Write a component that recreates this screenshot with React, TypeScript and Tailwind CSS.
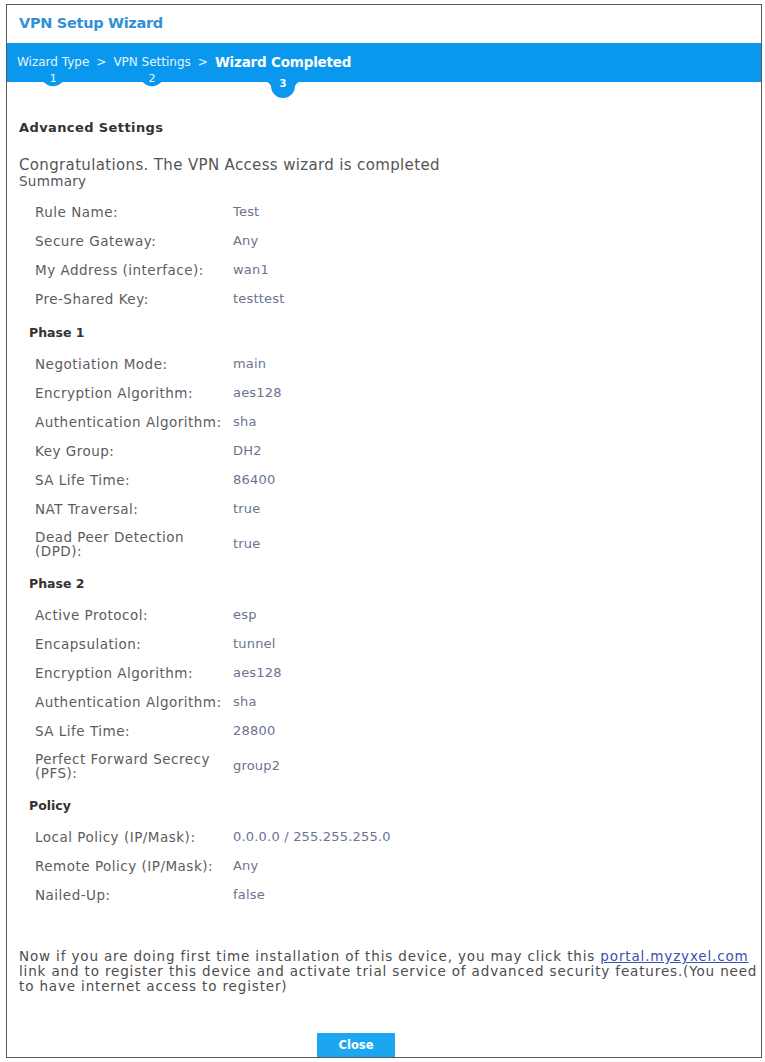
import React from "react";

type Row = { label: React.ReactNode; value: string; tall?: boolean };
type Section = { title?: string; rows: Row[] };

const sections: Section[] = [
  {
    rows: [
      { label: "Rule Name:", value: "Test" },
      { label: "Secure Gateway:", value: "Any" },
      { label: "My Address (interface):", value: "wan1" },
      { label: "Pre-Shared Key:", value: "testtest" },
    ],
  },
  {
    title: "Phase 1",
    rows: [
      { label: "Negotiation Mode:", value: "main" },
      { label: "Encryption Algorithm:", value: "aes128" },
      { label: "Authentication Algorithm:", value: "sha" },
      { label: "Key Group:", value: "DH2" },
      { label: "SA Life Time:", value: "86400" },
      { label: "NAT Traversal:", value: "true" },
      {
        label: (
          <>
            Dead Peer Detection
            <br />
            (DPD):
          </>
        ),
        value: "true",
        tall: true,
      },
    ],
  },
  {
    title: "Phase 2",
    rows: [
      { label: "Active Protocol:", value: "esp" },
      { label: "Encapsulation:", value: "tunnel" },
      { label: "Encryption Algorithm:", value: "aes128" },
      { label: "Authentication Algorithm:", value: "sha" },
      { label: "SA Life Time:", value: "28800" },
      {
        label: (
          <>
            Perfect Forward Secrecy
            <br />
            (PFS):
          </>
        ),
        value: "group2",
        tall: true,
      },
    ],
  },
  {
    title: "Policy",
    rows: [
      { label: "Local Policy (IP/Mask):", value: "0.0.0.0 / 255.255.255.0" },
      { label: "Remote Policy (IP/Mask):", value: "Any" },
      { label: "Nailed-Up:", value: "false" },
    ],
  },
];

// Small downward bump under a wizard step, flared where it meets the bar.
function Bump({ big }: { big?: boolean }) {
  if (big) {
    return (
      <svg
        width="44"
        height="18"
        viewBox="0 0 44 18"
        className="absolute left-1/2 top-[calc(100%-1px)] -translate-x-1/2"
      >
        <path d="M0 0 Q8 0 10 5 A12 12 0 0 0 34 5 Q36 0 44 0 Z" fill="#0a97ee" />
      </svg>
    );
  }
  return (
    <svg
      width="32"
      height="7"
      viewBox="0 0 32 7"
      className="absolute left-1/2 top-[calc(100%-1px)] -translate-x-1/2"
    >
      <path d="M0 0 Q7 0 9 3 A12 12 0 0 0 23 3 Q25 0 32 0 Z" fill="#0a97ee" />
    </svg>
  );
}

function Step({
  label,
  num,
  active,
}: {
  label: string;
  num: string;
  active?: boolean;
}) {
  return (
    <div className="relative flex h-full flex-col items-center pt-[11px]">
      <span
        className={
          active
            ? "text-[13.5px] font-bold leading-[16px] text-white tracking-[-0.2px]"
            : "text-[12px] leading-[16px] text-white/90"
        }
      >
        {label}
      </span>
      <Bump big={active} />
      <span
        className={
          active
            ? "absolute left-1/2 top-[35px] -translate-x-1/2 text-[10px] font-bold leading-[12px] text-white"
            : "absolute left-1/2 top-[30px] -translate-x-1/2 text-[11px] leading-[12px] text-white/90"
        }
      >
        {num}
      </span>
    </div>
  );
}

function Sep() {
  return <span className="px-[7px] pt-[11px] text-[12px] leading-[16px] text-white/90">&gt;</span>;
}

export default function App() {
  return (
    <div
      className="min-h-[1062px] bg-white pl-[6px] pt-[4px]"
      style={{ fontFamily: '"DejaVu Sans", "Noto Sans", sans-serif' }}
    >
      <div className="relative h-[1054px] w-[756px] overflow-hidden border border-[#5a5a5a] bg-white">
        {/* Title */}
        <div className="flex h-[38px] items-center pl-[12px] pb-[1px]">
          <h1 className="text-[14.5px] font-bold tracking-[-0.3px] text-[#3191d6]">
            VPN Setup Wizard
          </h1>
        </div>

        {/* Step bar */}
        <div className="relative z-10 flex h-[39px] items-start bg-[#0a97ee] pl-[10px]">
          <Step label="Wizard Type" num="1" />
          <Sep />
          <Step label="VPN Settings" num="2" />
          <Sep />
          <Step label="Wizard Completed" num="3" active />
        </div>

        {/* Body */}
        <div className="px-[12px] pt-[38px]">
          <h2 className="text-[13px] font-bold leading-[16px] tracking-[0.4px] text-[#333333]">
            Advanced Settings
          </h2>
          <p className="mt-[21px] text-[15px] leading-[16px] text-[#555555] tracking-[0.35px]">
            Congratulations. The VPN Access wizard is completed
          </p>
          <p className="text-[13.5px] leading-[16px] tracking-[0.3px] text-[#555555]">Summary</p>

          <div className="mt-[8px] pl-[16px]">
            {sections.map((s, i) => (
              <div key={i}>
                {s.title && (
                  <div className="-ml-[6px] flex h-[36px] pt-[12px]">
                    <span className="text-[12.5px] font-bold leading-[16px] text-[#333333]">
                      {s.title}
                    </span>
                  </div>
                )}
                {s.rows.map((r, j) => (
                  <div
                    key={j}
                    className={`flex items-center ${r.tall ? "h-[41px]" : "h-[29px]"}`}
                  >
                    <div className="w-[198px] text-[13.5px] leading-[14px] text-[#5c5c5c] tracking-[0.5px]">
                      {r.label}
                    </div>
                    <div className="text-[13px] leading-[14px] tracking-[0.2px] text-[#6b7393]">
                      {r.value}
                    </div>
                  </div>
                ))}
              </div>
            ))}
          </div>

          <p className="mt-[40px] whitespace-nowrap text-[13.5px] leading-[15px] text-[#4d4d4d] tracking-[0.85px]">
            Now if you are doing first time installation of this device, you may click this{" "}
            <a className="text-[#3a4fb0] underline">portal.myzyxel.com</a>
            <br />
            link and to register this device and activate trial service of advanced security
            features.(You need
            <br />
            to have internet access to register)
          </p>

          <div className="mt-[38px] pl-[298px]">
            <button className="h-[26px] w-[78px] bg-[#1ca6f0] text-[11.5px] font-bold text-white">
              Close
            </button>
          </div>
        </div>
      </div>
    </div>
  );
}
